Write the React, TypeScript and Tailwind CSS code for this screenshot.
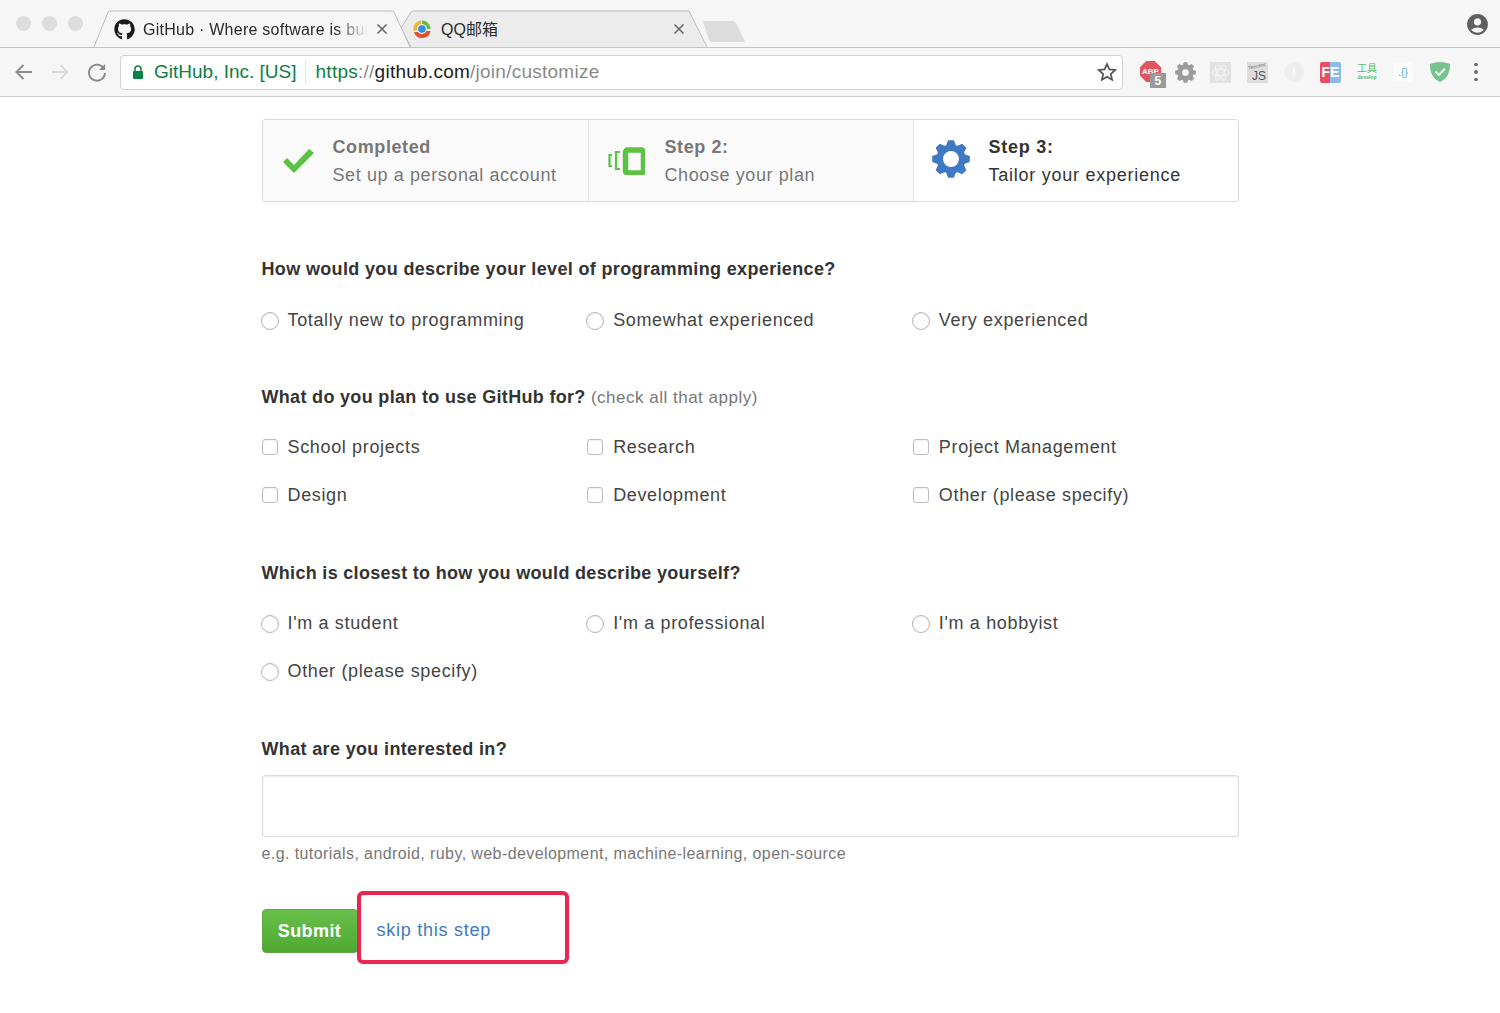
import { FaGithub } from "react-icons/fa";
import { MdAccountCircle } from "react-icons/md";

const font = { fontFamily: '"Liberation Sans", "Noto Sans CJK SC", sans-serif' };

// solid 8 tooth gear, the hole is cut with evenodd
function gearPath(hole: number) {
  const pts: string[] = [];
  const teeth = 8;
  for (let i = 0; i < teeth; i++) {
    const a = (i / teeth) * Math.PI * 2;
    const step = (Math.PI * 2) / teeth;
    const pairs: [number, number][] = [
      [7.7, a - step * 0.42],
      [10, a - step * 0.2],
      [10, a + step * 0.2],
      [7.7, a + step * 0.42],
    ];
    for (const [r, t] of pairs) {
      pts.push(`${(10 + r * Math.cos(t)).toFixed(2)} ${(10 + r * Math.sin(t)).toFixed(2)}`);
    }
  }
  const ring = `M${10 - hole} 10 a${hole} ${hole} 0 1 0 ${hole * 2} 0 a${hole} ${hole} 0 1 0 ${-hole * 2} 0 Z`;
  return `M${pts.join(" L")} Z ${ring}`;
}

function Gear({ size, color, hole, className }: { size: number; color: string; hole: number; className?: string }) {
  return (
    <svg className={className} width={size} height={size} viewBox="0 0 20 20">
      <path d={gearPath(hole)} fill={color} fillRule="evenodd" />
    </svg>
  );
}

function CloseIcon({ className }: { className?: string }) {
  return (
    <svg className={className} width="10" height="10" viewBox="0 0 10 10" stroke="#666" strokeWidth="1.5">
      <path d="M0.5 0.5 L9.5 9.5 M9.5 0.5 L0.5 9.5" />
    </svg>
  );
}

function TabShapes() {
  return (
    <svg className="absolute left-0 top-0" width="760" height="48" viewBox="0 0 760 48" fill="none">
      <path d="M411 47 L401 28 L411 12 Q412 11 414 11 L689 11 L707 47" stroke="#bdbdbd" fill="#ececec" />
      <path d="M94 47 L108 12 Q109 11 111 11 L391 11 Q393 11 394 12 L410 47" stroke="#bdbdbd" fill="#f6f6f6" />
      <path d="M703 21 L733 21 Q735 21 736 23 L745 42 L712 42 Q710 42 709 40 Z" fill="#dcdcdc" />
    </svg>
  );
}

function QQIcon() {
  return (
    <svg width="22" height="22" viewBox="0 0 22 22">
      <path d="M2.5 13 A8.5 8.5 0 0 1 10 2.5 L10 6 A5 5 0 0 0 6 12 Z" fill="#f2b632" />
      <path d="M11 2.5 A8.5 8.5 0 0 1 19.5 11 L16 11 A5 5 0 0 0 11 6 Z" fill="#6bb544" />
      <path d="M3 14 A8.5 8.5 0 0 0 19.5 13 L15.5 13 A5 5 0 0 1 7 14 Z" fill="#e2512c" />
      <circle cx="11" cy="11" r="3.8" fill="#2f8fe0" />
    </svg>
  );
}

function AtomIcon() {
  return (
    <div className="ml-[14px] flex h-[21px] w-[21px] items-center justify-center bg-[#e2e2e2]">
      <svg width="19" height="17" viewBox="0 0 19 17" fill="none" stroke="#f4f4f4" strokeWidth="1">
        <ellipse cx="9.5" cy="8.5" rx="8.5" ry="3.2" />
        <ellipse cx="9.5" cy="8.5" rx="8.5" ry="3.2" transform="rotate(60 9.5 8.5)" />
        <ellipse cx="9.5" cy="8.5" rx="8.5" ry="3.2" transform="rotate(120 9.5 8.5)" />
      </svg>
    </div>
  );
}

function Extensions() {
  return (
    <div className="ml-[14px] flex items-center">
      <div className="relative h-[22px] w-[36px]">
        <div className="ml-px flex h-[21px] w-[21px] items-center justify-center bg-[#e2545f] text-[8px] font-bold leading-none tracking-normal text-white [clip-path:polygon(30%_0,70%_0,100%_30%,100%_70%,70%_100%,30%_100%,0_70%,0_30%)]">ABP</div>
        <div className="absolute left-[11px] top-[12px] flex h-[15px] w-[16px] items-center justify-center bg-[#9a9a9a] text-[12px] font-bold leading-none text-white">5</div>
      </div>
      <Gear size={21} color="#9c9c9c" hole={3.2} />
      <AtomIcon />
      <div className="relative ml-[16px] flex h-[21px] w-[21px] items-end justify-end bg-[#dedede] pr-[2px] text-[12px] leading-[14px] tracking-normal text-[#555]">
        JS
        <span className="absolute left-px top-[2px] -rotate-12 text-[5px] leading-none text-[#777]">Tencent</span>
      </div>
      <div className="ml-[16px] flex h-[20px] w-[20px] items-center justify-center rounded-full bg-[#eeeeee] text-[11px] font-bold text-[#f8f8f8]">!</div>
      <div className="ml-[16px] flex h-[21px] w-[21px] items-center justify-center overflow-hidden rounded-[2px] bg-[linear-gradient(90deg,#e9505f_50%,#8db9ea_50%)] text-[14px] font-bold leading-none tracking-normal text-white">FE</div>
      <div className="ml-[16px] flex w-[20px] flex-col items-center whitespace-nowrap tracking-normal text-[#55bd6c]">
        <span className="text-[10px] leading-[11px]">工具</span>
        <span className="text-[5px] font-bold leading-[7px]">develop</span>
      </div>
      <div className="ml-[16px] flex h-[20px] w-[20px] items-center justify-center bg-[#fbfbfb] text-[10px] tracking-normal text-[#4aa8e0]">.{"{}"}</div>
      <svg className="ml-[16px]" width="22" height="22" viewBox="0 0 22 22">
        <path d="M11 1 C7 1 4 2 1 3 C1 12 4 18 11 21 C18 18 21 12 21 3 C18 2 15 1 11 1 Z" fill="#76c38e" />
        <path d="M6.5 10.5 L10 14 L16 7.5" stroke="#f4f4f4" strokeWidth="2" fill="none" />
      </svg>
      <div className="ml-[23px] flex flex-col gap-[4px]">
        <div className="h-[3.5px] w-[3.5px] rounded-full bg-[#6e6e6e]" />
        <div className="h-[3.5px] w-[3.5px] rounded-full bg-[#6e6e6e]" />
        <div className="h-[3.5px] w-[3.5px] rounded-full bg-[#6e6e6e]" />
      </div>
    </div>
  );
}

function BrowserChrome() {
  return (
    <div className="bg-[#f6f6f6]">
      <div className="relative h-[48px] border-b border-[#c4c4c4]">
        <TabShapes />
        <div className="relative flex h-[47px] items-center pl-[16px] pt-[11px]">
          <div className="-mt-[11px] flex gap-[11px]">
            <div className="h-[15px] w-[15px] rounded-full bg-[#dddddd]" />
            <div className="h-[15px] w-[15px] rounded-full bg-[#dddddd]" />
            <div className="h-[15px] w-[15px] rounded-full bg-[#dddddd]" />
          </div>
          <FaGithub className="ml-[31px] text-[#1b1b1b]" size={21} />
          <span className="ml-[8px] mt-[2px] w-[225px] overflow-hidden whitespace-nowrap text-[16px] text-[#2a2a2a] [mask-image:linear-gradient(90deg,#000_85%,transparent)]">GitHub · Where software is bui</span>
          <CloseIcon className="ml-[9px]" />
          <div className="ml-[24px]"><QQIcon /></div>
          <span className="ml-[8px] mt-[2px] w-[233px] text-[16px] tracking-normal text-[#2a2a2a]">QQ邮箱</span>
          <CloseIcon />
          <MdAccountCircle className="absolute right-[10px] top-[12px] text-[#5f5f5f]" size={25} />
        </div>
      </div>
      <div className="flex h-[49px] items-center border-b border-[#d0d0d0] pl-[14px]">
        <svg width="20" height="20" viewBox="0 0 20 20" fill="none" stroke="#8a8a8a" strokeWidth="1.8">
          <path d="M18 10 H2.5 M9.5 3 L2.5 10 L9.5 17" />
        </svg>
        <svg className="ml-[16px]" width="20" height="20" viewBox="0 0 20 20" fill="none" stroke="#d9d9d9" strokeWidth="1.8">
          <path d="M2 10 H17.5 M10.5 3 L17.5 10 L10.5 17" />
        </svg>
        <svg className="ml-[17px]" width="20" height="20" viewBox="0 0 20 20" fill="none" stroke="#8a8a8a" strokeWidth="1.9">
          <path d="M16.5 6 A8 8 0 1 0 18 11" />
          <path d="M18 2 V8 H12 Z" fill="#8a8a8a" stroke="none" />
        </svg>
        <div className="ml-[13px] flex h-[35px] w-[1003px] items-center rounded-[4px] border border-[#d2d2d2] bg-white pl-[11px] pr-[5px] text-[19px]">
          <svg width="12" height="14" viewBox="0 0 12 14">
            <path d="M3 6 V4 A3 3 0 0 1 9 4 V6" stroke="#0b8043" strokeWidth="1.5" fill="none" />
            <rect x="1" y="6" width="10" height="8" rx="1" fill="#0b8043" />
          </svg>
          <span className="ml-[10px] tracking-normal text-[#0b8043]">GitHub, Inc. [US]</span>
          <div className="ml-[8px] h-[24px] w-px bg-[#e4e4e4]" />
          <span className="ml-[10px] text-[#0b8043]">https</span>
          <span className="text-[#8a8a8a]">://</span>
          <span className="text-[#1c1c1c]">github.com</span>
          <span className="text-[#8a8a8a]">/join/customize</span>
          <svg className="ml-auto" width="20" height="20" viewBox="0 0 20 20">
            <path d="M10 2 L12.4 7.4 L18.2 8 L13.8 12 L15.1 17.8 L10 14.8 L4.9 17.8 L6.2 12 L1.8 8 L7.6 7.4 Z" fill="none" stroke="#555" strokeWidth="1.7" />
          </svg>
        </div>
        <div className="ml-[2px]">
          <Extensions />
        </div>
      </div>
    </div>
  );
}

function Steps() {
  return (
    <div className="mt-[22px] flex h-[83px] overflow-hidden rounded-[3px] border border-[#dcdcdc] text-[18px] leading-[28px] tracking-[0.6px]">
      <div className="flex w-[325px] items-center bg-[#fafafa] text-[#777]">
        <svg className="ml-[19px] shrink-0" width="33" height="26" viewBox="0 0 33 26">
          <path d="M1 14 L5 10 L12 17 L27 1 L32 5 L12 25 Z" fill="#5cc244" />
        </svg>
        <div className="ml-[18px]">
          <div className="font-bold">Completed</div>
          <div>Set up a personal account</div>
        </div>
      </div>
      <div className="flex w-[325px] items-center border-l border-[#e2e2e2] bg-[#fafafa] text-[#777]">
        <svg className="ml-[18px] shrink-0" width="38" height="28" viewBox="0 0 38 28" fill="none" stroke="#5cc244">
          <path d="M5 8 H2.5 V19 H5" strokeWidth="2.2" />
          <path d="M13 5 H9 V22 H13" strokeWidth="2.2" />
          <rect x="18.5" y="3" width="18" height="23" rx="2" strokeWidth="5.5" />
        </svg>
        <div className="ml-[20px]">
          <div className="font-bold">Step 2:</div>
          <div>Choose your plan</div>
        </div>
      </div>
      <div className="flex flex-1 items-center border-l border-[#e2e2e2] bg-white text-[#333]">
        <Gear className="-mt-[3px] ml-[18px] shrink-0" size={38} color="#3f78c4" hole={4.2} />
        <div className="ml-[19px] tracking-[0.75px]">
          <div className="font-bold">Step 3:</div>
          <div>Tailor your experience</div>
        </div>
      </div>
    </div>
  );
}

function Option({ label, type }: { label: string; type: "radio" | "check" }) {
  return (
    <div className="flex h-[48px] items-center">
      {type === "radio" ? (
        <div className="-ml-[1px] mt-px h-[18px] w-[18px] rounded-full border border-[#b4b4b4] bg-white shadow-[inset_0_1px_2px_rgba(0,0,0,0.08)]" />
      ) : (
        <div className="h-4 w-4 rounded-[3px] border border-[#bdbdbd] bg-white shadow-[inset_0_1px_2px_rgba(0,0,0,0.06)]" />
      )}
      <span className={type === "radio" ? "ml-[9px] tracking-[0.65px] text-[#444]" : "ml-[10px] tracking-[0.65px] text-[#444]"}>{label}</span>
    </div>
  );
}

export default function App() {
  return (
    <div className="min-h-[1013px] bg-white tracking-[0.25px]" style={font}>
      <BrowserChrome />
      <div className="mx-auto w-[977px] text-[18px]">
        <Steps />

        <h2 className="mt-[54px] h-6 text-[18px] font-bold leading-[26px] tracking-[0.35px] text-[#333]">How would you describe your level of programming experience?</h2>
        <div className="mt-[16px] grid grid-cols-3">
          <Option type="radio" label="Totally new to programming" />
          <Option type="radio" label="Somewhat experienced" />
          <Option type="radio" label="Very experienced" />
        </div>

        <h2 className="mt-[40px] h-6 text-[18px] leading-[26px] text-[#777]">
          <span className="font-bold tracking-[0.32px] text-[#333]">What do you plan to use GitHub for?</span> <span className="text-[17px] tracking-[0.5px]">(check all that apply)</span>
        </h2>
        <div className="mt-[15px] grid grid-cols-3">
          <Option type="check" label="School projects" />
          <Option type="check" label="Research" />
          <Option type="check" label="Project Management" />
          <Option type="check" label="Design" />
          <Option type="check" label="Development" />
          <Option type="check" label="Other (please specify)" />
        </div>

        <h2 className="mt-[41px] h-6 text-[18px] font-bold leading-[26px] tracking-[0.31px] text-[#333]">Which is closest to how you would describe yourself?</h2>
        <div className="mt-[15px] grid grid-cols-3">
          <Option type="radio" label="I'm a student" />
          <Option type="radio" label="I'm a professional" />
          <Option type="radio" label="I'm a hobbyist" />
          <Option type="radio" label="Other (please specify)" />
        </div>

        <h2 className="mt-[41px] h-6 text-[18px] font-bold leading-[26px] tracking-[0.35px] text-[#333]">What are you interested in?</h2>
        <div className="mt-[15px] h-[62px] rounded-[3px] border border-[#dcdcdc] bg-white shadow-[inset_0_1px_2px_rgba(0,0,0,0.1)]" />
        <p className="mt-[6px] h-5 text-[16px] leading-[22px] tracking-[0.41px] text-[#777]">e.g. tutorials, android, ruby, web-development, machine-learning, open-source</p>

        <div className="mt-[28px] flex h-[73px] items-center">
          <button className="mt-[6px] h-[44px] w-[96px] rounded-[4px] border border-[#5ca941] bg-gradient-to-b from-[#68c04a] to-[#4ea832] pt-px text-[18px] font-bold tracking-[0.4px] text-white">Submit</button>
          <div className="-ml-px flex h-[73px] w-[212px] items-center rounded-[6px] border-[4px] border-[#e8264f] bg-white pl-[16px] pt-[5px] text-[18px] tracking-[0.75px] text-[#4078c0]">skip this step</div>
        </div>
      </div>
    </div>
  );
}
